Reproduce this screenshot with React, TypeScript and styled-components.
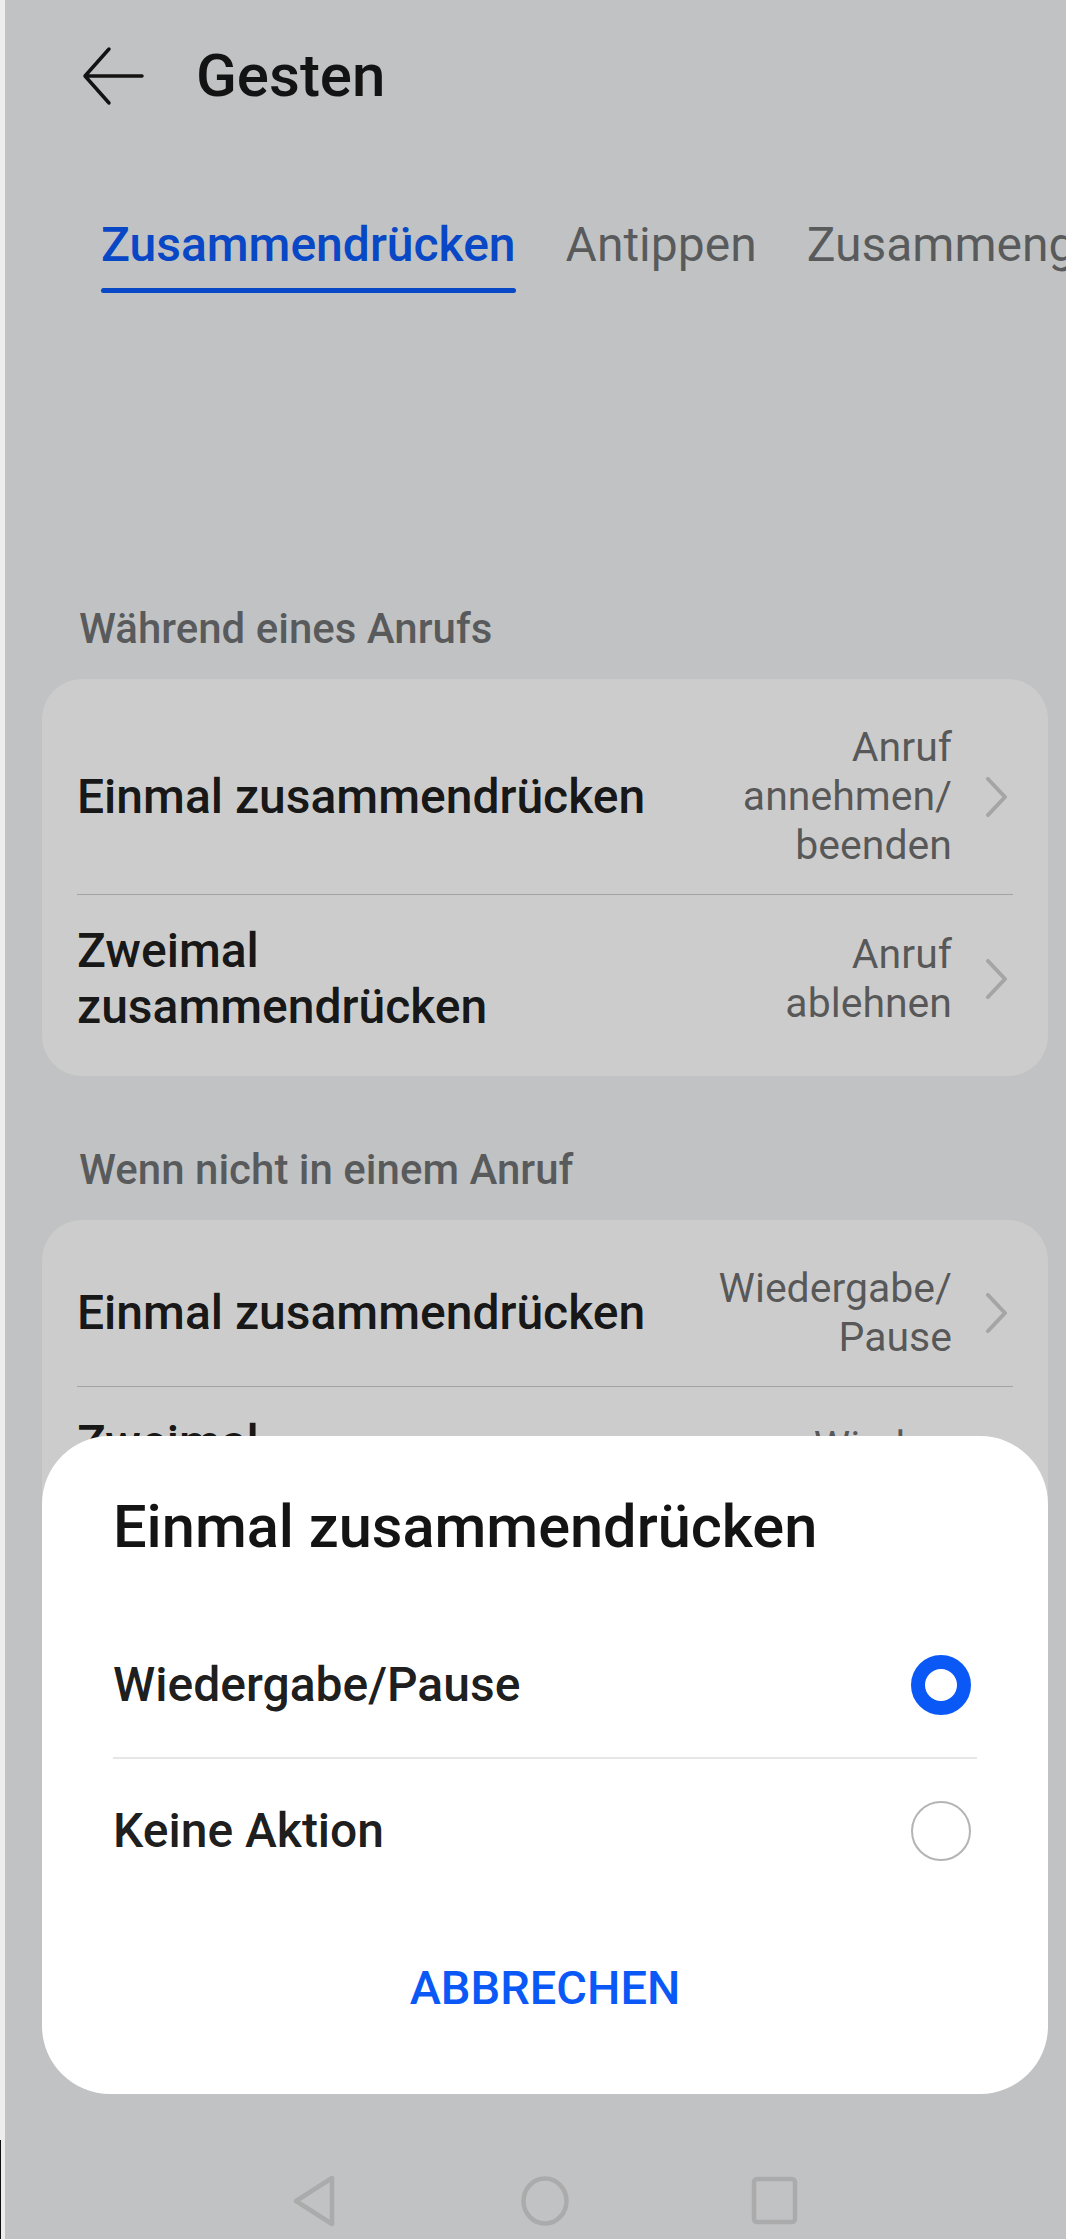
import styled, { createGlobalStyle } from 'styled-components';

const GlobalStyle = createGlobalStyle`
  html, body {
    margin: 0;
    padding: 0;
  }
  body {
    width: 1066px;
    height: 2239px;
    overflow: hidden;
    background: #ededed;
    font-family: Roboto, "Noto Sans", "Liberation Sans", Arial, sans-serif;
    -webkit-font-smoothing: antialiased;
  }
`;

const Frame = styled.div`
  display: flex;
  height: 2239px;
`;

const EdgeStrip = styled.div`
  width: 5px;
  flex-shrink: 0;
  background: #ededed;
  display: flex;
  flex-direction: column;
  justify-content: flex-end;
`;

const EdgeLine = styled.div`
  width: 1px;
  height: 99px;
  background: #111;
`;

const Screen = styled.div`
  position: relative;
  width: 1080px;
  flex-shrink: 0;
  background: #f1f3f5;
  display: flex;
  flex-direction: column;
  overflow: hidden;
`;

const Header = styled.header`
  height: 152px;
  display: flex;
  align-items: center;
  gap: 51px;
  padding-left: 76px;
`;

const PageTitle = styled.h1`
  margin: 0;
  font-size: 60px;
  line-height: 72px;
  font-weight: 500;
  color: rgba(0, 0, 0, 0.9);
`;

const TabBar = styled.nav`
  display: flex;
  gap: 50px;
  padding: 65px 0 0 96px;
  white-space: nowrap;
`;

const Tab = styled.div`
  display: flex;
  flex-direction: column;
  flex-shrink: 0;
`;

const TabLabel = styled.span<{ $active?: boolean }>`
  font-size: 48px;
  line-height: 56px;
  font-weight: ${(p) => (p.$active ? 500 : 400)};
  color: ${(p) => (p.$active ? '#0a59f7' : 'rgba(0, 0, 0, 0.55)')};
`;

const TabIndicator = styled.div`
  margin-top: 15px;
  height: 5px;
  border-radius: 3px;
  background: #0a59f7;
`;

const HeroSpace = styled.div`
  height: 242px;
`;

const SectionTitle = styled.h2`
  margin: 0;
  padding: 70px 74px 26px;
  font-size: 42px;
  line-height: 48px;
  font-weight: 500;
  color: rgba(0, 0, 0, 0.55);
`;

const Card = styled.section`
  margin: 0 37px;
  padding: 16px 0 17px;
  background: #fff;
  border-radius: 40px;
`;

const Item = styled.div`
  padding: 0 35px;
`;

const ItemBody = styled.div<{ $last?: boolean }>`
  display: flex;
  align-items: center;
  padding: 28px 0 24px;
  border-bottom: ${(p) => (p.$last ? 'none' : '1.5px solid rgba(0, 0, 0, 0.2)')};
`;

const ItemTitle = styled.div`
  flex: 1;
  font-size: 48px;
  line-height: 56px;
  font-weight: 500;
  color: rgba(0, 0, 0, 0.9);
  white-space: pre-line;
`;

const ItemValue = styled.div`
  margin-left: 24px;
  font-size: 41px;
  line-height: 49px;
  text-align: right;
  color: rgba(0, 0, 0, 0.58);
  white-space: pre-line;
`;

const ChevronIcon = styled.svg`
  flex-shrink: 0;
  margin: 0 4px 0 33px;
`;

const Content = styled.main`
  flex: 1;
`;

const NavBar = styled.div`
  height: 76px;
  display: flex;
  justify-content: center;
  align-items: center;
`;

const NavSlot = styled.div`
  width: 230px;
  display: flex;
  justify-content: center;
  align-items: center;
`;

const Scrim = styled.div`
  position: absolute;
  inset: 0;
  background: rgba(0, 0, 0, 0.2);
  z-index: 1;
`;

const Dialog = styled.div`
  position: absolute;
  left: 37px;
  right: 37px;
  bottom: 145px;
  z-index: 2;
  background: #fff;
  border-radius: 68px;
  padding: 57px 71px 78px;
`;

const DialogTitle = styled.h3`
  margin: 0 0 52px;
  font-size: 59.5px;
  line-height: 68px;
  font-weight: 500;
  color: rgba(0, 0, 0, 0.92);
`;

const Option = styled.div<{ $divider?: boolean }>`
  height: 144px;
  display: flex;
  align-items: center;
  justify-content: space-between;
  border-bottom: ${(p) => (p.$divider ? '2px solid #e6e6e6' : 'none')};
`;

const OptionLabel = styled.span`
  font-size: 48px;
  line-height: 56px;
  font-weight: 500;
  color: rgba(0, 0, 0, 0.9);
`;

const RadioBox = styled.div`
  width: 72px;
  height: 72px;
  display: flex;
  align-items: center;
  justify-content: center;
`;

const Radio = styled.div<{ $checked?: boolean }>`
  box-sizing: border-box;
  width: 60px;
  height: 60px;
  border-radius: 50%;
  background: #fff;
  border: ${(p) => (p.$checked ? '14.5px solid #0a59f7' : '2.5px solid #b4b4b4')};
`;

const DialogFooter = styled.div`
  padding-top: 57px;
  display: flex;
  justify-content: center;
`;

const TextButton = styled.button`
  border: none;
  background: none;
  padding: 0;
  font-family: inherit;
  font-size: 47px;
  line-height: 56px;
  font-weight: 500;
  color: #0a59f7;
`;

const Chevron = () => (
  <ChevronIcon width="24" height="40" viewBox="0 0 24 40">
    <path d="M3 2 L20 20 L3 38" fill="none" stroke="#cfcfcf" strokeWidth="4" strokeLinecap="round" strokeLinejoin="round" />
  </ChevronIcon>
);

type Row = { title: string; value: string };

const duringCall: Row[] = [
  { title: 'Einmal zusammendrücken', value: 'Anruf\nannehmen/\nbeenden' },
  { title: 'Zweimal\nzusammendrücken', value: 'Anruf\nablehnen' },
];

const notInCall: Row[] = [
  { title: 'Einmal zusammendrücken', value: 'Wiedergabe/\nPause' },
  { title: 'Zweimal\nzusammendrücken', value: 'Wieder-\ngabe' },
];

const SettingsCard = ({ rows }: { rows: Row[] }) => (
  <Card>
    {rows.map((row, i) => (
      <Item key={row.title}>
        <ItemBody $last={i === rows.length - 1}>
          <ItemTitle>{row.title}</ItemTitle>
          <ItemValue>{row.value}</ItemValue>
          <Chevron />
        </ItemBody>
      </Item>
    ))}
  </Card>
);

const options = [
  { label: 'Wiedergabe/Pause', checked: true },
  { label: 'Keine Aktion', checked: false },
];

export default function App() {
  return (
    <Frame>
      <GlobalStyle />
      <EdgeStrip>
        <EdgeLine />
      </EdgeStrip>
      <Screen>
        <Content>
          <Header>
            <svg width="64" height="60" viewBox="0 0 64 60">
              <path
                d="M61 30 H4 M28 3 L4 30 L28 57"
                fill="none"
                stroke="rgba(0,0,0,0.9)"
                strokeWidth="3.5"
                strokeLinecap="round"
                strokeLinejoin="round"
              />
            </svg>
            <PageTitle>Gesten</PageTitle>
          </Header>
          <TabBar>
            <Tab>
              <TabLabel $active>Zusammendrücken</TabLabel>
              <TabIndicator />
            </Tab>
            <Tab>
              <TabLabel>Antippen</TabLabel>
            </Tab>
            <Tab>
              <TabLabel>Zusammengedrückt halten</TabLabel>
            </Tab>
          </TabBar>
          <HeroSpace />
          <SectionTitle>Während eines Anrufs</SectionTitle>
          <SettingsCard rows={duringCall} />
          <SectionTitle>Wenn nicht in einem Anruf</SectionTitle>
          <SettingsCard rows={notInCall} />
        </Content>
        <NavBar>
          <NavSlot>
            <svg width="46" height="52" viewBox="0 0 46 52">
              <path d="M40 3 L4 26 L40 49 Z" fill="none" stroke="#d6d6d6" strokeWidth="4.5" strokeLinejoin="round" />
            </svg>
          </NavSlot>
          <NavSlot>
            <svg width="50" height="52" viewBox="0 0 50 52">
              <ellipse cx="25" cy="26" rx="21.5" ry="22.5" fill="none" stroke="#d6d6d6" strokeWidth="4.5" />
            </svg>
          </NavSlot>
          <NavSlot>
            <svg width="48" height="50" viewBox="0 0 48 50">
              <rect x="3" y="3" width="41" height="43" rx="3" fill="none" stroke="#d6d6d6" strokeWidth="4.5" />
            </svg>
          </NavSlot>
        </NavBar>
        <Scrim />
        <Dialog>
          <DialogTitle>Einmal zusammendrücken</DialogTitle>
          {options.map((opt, i) => (
            <Option key={opt.label} $divider={i < options.length - 1}>
              <OptionLabel>{opt.label}</OptionLabel>
              <RadioBox>
                <Radio $checked={opt.checked} />
              </RadioBox>
            </Option>
          ))}
          <DialogFooter>
            <TextButton>ABBRECHEN</TextButton>
          </DialogFooter>
        </Dialog>
      </Screen>
    </Frame>
  );
}
